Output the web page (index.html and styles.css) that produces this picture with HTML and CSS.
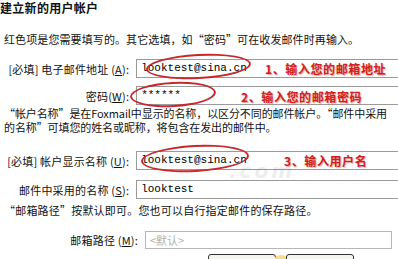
FILE: index.html
```html
<!DOCTYPE html>
<html>
<head lang="zh">
    <meta charset="UTF-8">
    <title>建立新的用户帐户</title>
    <link rel="stylesheet" href="styles.css">
</head>
<body>
<div class="page">
    <div class="title">建立新的用户帐户</div>
    <p class="note first">红色项是您需要填写的。其它选填，如“密码”可在收发邮件时再输入。</p>

    <div class="row r1">
        <label class="lbl">[必填] 电子邮件地址 (<u>A</u>):</label>
        <div class="field">looktest@sina.cn</div>
        <span class="ring ring1"></span>
        <span class="tip tip1">1、输入您的邮箱地址</span>
    </div>
    <div class="row r2">
        <label class="lbl">密码(<u>W</u>):</label>
        <div class="field">******</div>
        <span class="ring ring2"></span>
        <span class="tip tip2">2、输入您的邮箱密码</span>
    </div>

    <p class="note two">“帐户名称”是在Foxmail中显示的名称，以区分不同的邮件帐户。“邮件中采用<br>的名称”可填您的姓名或昵称，将包含在发出的邮件中。</p>

    <div class="row r3">
        <label class="lbl">[必填] 帐户显示名称 (<u>U</u>):</label>
        <div class="field">looktest@sina.cn</div>
        <span class="ring ring3"></span>
        <span class="tip tip3">3、输入用户名</span>
        <span class="mark">.com</span>
    </div>
    <div class="row r4">
        <label class="lbl">邮件中采用的名称 (<u>S</u>):</label>
        <div class="field">looktest</div>
    </div>

    <p class="note three">“邮箱路径”按默认即可。您也可以自行指定邮件的保存路径。</p>

    <div class="row r5">
        <label class="lbl">邮箱路径 (<u>M</u>):</label>
        <div class="field off">&lt;默认&gt;</div>
    </div>

    <div class="buttons">
        <span class="btn"></span>
        <span class="glow"></span>
        <span class="btn"></span>
    </div>
</div>
</body>
</html>
```

FILE: styles.css
```css
*
{
    margin: 0;
    padding: 0;
}
body
{
    background: #fff;
    width: 398px;
    height: 259px;
    overflow: hidden;
    font-family: "Noto Sans CJK SC", "DejaVu Sans", sans-serif;
    font-size: 11px;
    color: #111;
}
.page
{
    display: flex;
    flex-direction: column;
    padding-left: 4px;
}
.title
{
    margin-left: -4px;
    padding-top: 1px;
    height: 14px;
    line-height: 14px;
    font-size: 12px;
    font-weight: bold;
    letter-spacing: 0.3px;
}
.note
{
    line-height: 12px;
    letter-spacing: 0.1px;
}
.note.first
{
    margin-top: 18px;
}
.note.two
{
    margin-top: 1px;
    line-height: 14px;
    letter-spacing: -0.1px;
}
.note.three
{
    margin-top: 5px;
    letter-spacing: 0.2px;
}
.row
{
    position: relative;
    display: flex;
    align-items: center;
    height: 19px;
}
.r1
{
    margin-top: 14px;
}
.r2
{
    margin-top: 8px;
}
.r3
{
    margin-top: 17px;
}
.r4
{
    margin-top: 10px;
}
.r5
{
    margin-top: 14px;
}
.lbl
{
    width: 134px;
    text-align: right;
    white-space: nowrap;
    letter-spacing: 0.2px;
}
.lbl u
{
    text-decoration: underline;
}
.field
{
    margin-left: 7px;
    width: 280px;
    height: 19px;
    line-height: 17px;
    box-sizing: border-box;
    border: 1px solid #9a9a9a;
    border-right: none;
    padding-left: 4px;
    font-family: "Liberation Mono", monospace;
    font-size: 11px;
    color: #000;
    background: #fff;
}
.r5 .field
{
    width: 247px;
    border-right: 1px solid #9a9a9a;
    height: 18px;
}
.field.off
{
    font-family: "Noto Sans CJK SC", sans-serif;
    color: #b0b0b0;
    border-color: #b5b5b5;
}
.ring
{
    position: absolute;
    border: 2px solid #c8282c;
    border-radius: 50%;
    transform: rotate(-3deg);
}
.ring1
{
    left: 142px;
    top: -5px;
    width: 101px;
    height: 21px;
}
.ring2
{
    left: 126px;
    top: -4px;
    width: 82px;
    height: 21px;
}
.ring3
{
    left: 137px;
    top: -6px;
    width: 104px;
    height: 23px;
}
.tip
{
    position: absolute;
    top: 1px;
    font-size: 12px;
    font-weight: bold;
    color: #d0201e;
    text-shadow: 1px 1px 1px #e9a0a0;
    letter-spacing: 0.6px;
    white-space: nowrap;
}
.tip1
{
    left: 261px;
}
.tip2
{
    left: 237px;
    top: 2px;
}
.tip3
{
    left: 280px;
}
.mark
{
    position: absolute;
    left: 225px;
    top: 8px;
    font-family: "DejaVu Sans", sans-serif;
    font-size: 20px;
    font-weight: bold;
    font-style: italic;
    color: rgba(120, 120, 140, 0.15);
    letter-spacing: 3px;
}
.buttons
{
    display: flex;
    align-items: flex-start;
    margin-top: 5px;
    padding-left: 204px;
    gap: 10px;
}
.btn
{
    width: 66px;
    height: 12px;
    border: 1px solid #333;
    border-radius: 3px;
    background: #f4f4f0;
}
.glow
{
    width: 14px;
    height: 10px;
    margin: 1px -12px 0 -12px;
    border-radius: 50%;
    background: #f7dc8c;
}
```
